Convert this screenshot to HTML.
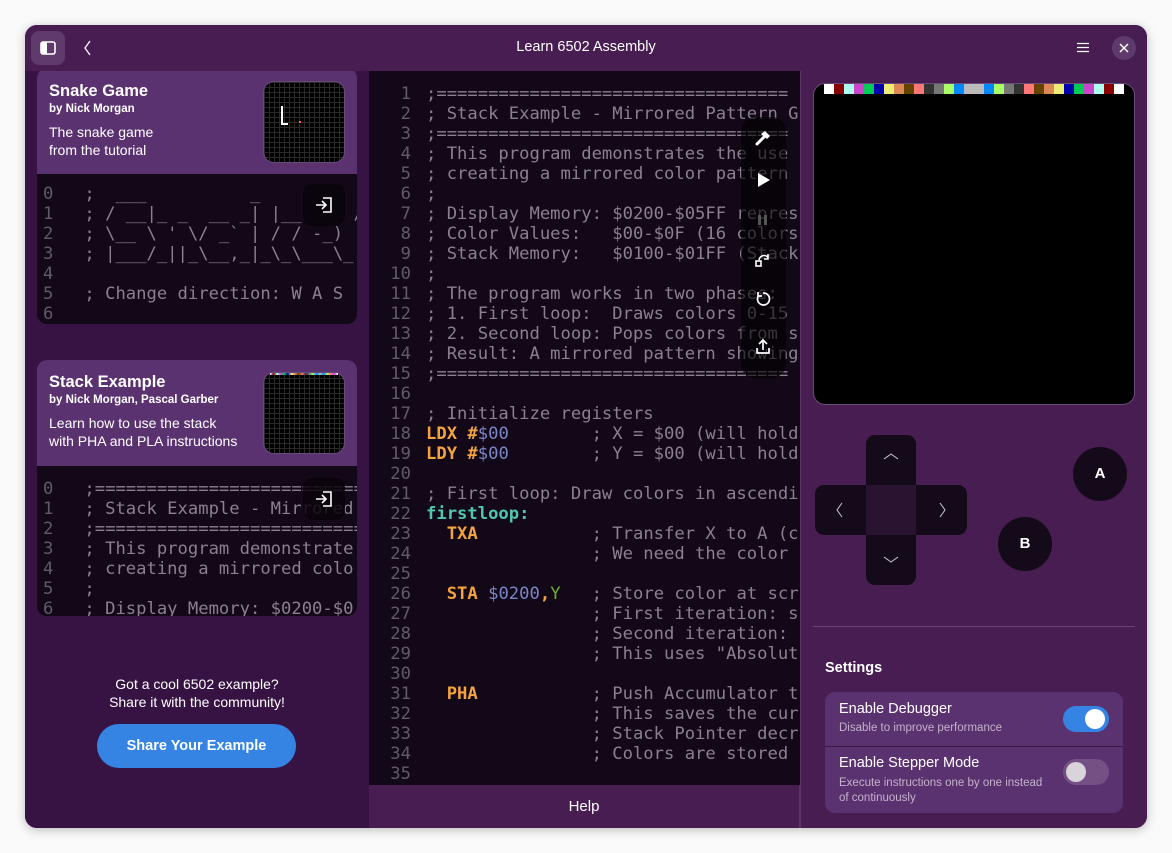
<!DOCTYPE html>
<html><head><meta charset="utf-8"><style>
*{box-sizing:border-box;margin:0;padding:0}
body{width:1172px;height:853px;background:#fafafa;position:relative;overflow:hidden;font-family:"Liberation Sans",sans-serif;color:#fff}
.win{position:absolute;left:25px;top:25px;width:1122px;height:803px;border-radius:12px;overflow:hidden;background:#471d52;box-shadow:0 2px 10px rgba(0,0,0,.25)}
.abs{position:absolute}
.mono{font-family:"DejaVu Sans Mono","Liberation Mono",monospace;font-size:17.2px;line-height:20px;white-space:pre;color:#8a8090}
.ln{color:#625a6a;text-align:right}
.side{left:0;top:46px;width:344px;height:757px;background:#361342;overflow:hidden}
.card{position:absolute;left:12px;width:320px;border-radius:10px;overflow:hidden;background:#130817}
.ch{background:#5a3270;height:106px;position:relative}
.ch h3{position:absolute;left:12px;font-size:16.5px;font-weight:bold}
.ch .by{position:absolute;left:12px;font-size:11.5px;font-weight:bold}
.ch .d{position:absolute;left:12px;font-size:14px;line-height:18px}
.thumb{position:absolute;left:226px;width:82px;height:82px;border-radius:11px;background-color:#000;border:1px solid #6a4a7a;background-image:linear-gradient(#2a2a2a 1px,transparent 1px),linear-gradient(90deg,#2a2a2a 1px,transparent 1px);background-size:5px 5px}
.ibtn{position:absolute;left:266px;width:42px;height:42px;border-radius:9px;background:#0a040c}
.code{left:344px;top:46px;width:431px;height:714px;background:#130817;overflow:hidden}
.kw{color:#f5a33f;font-weight:bold}.num{color:#7b86c8}.lbl{color:#4fc6b0;font-weight:bold}.reg{color:#6fae2a}
.help{left:344px;top:760px;width:431px;height:43px;background:#471d52;text-align:center;line-height:43px;font-size:15px;border-right:1px solid #5c3468}
.right{left:775px;top:46px;width:347px;height:757px;background:#471d52;border-left:1px solid #5c3468}
.pad{position:absolute;background:#150a1a}
.circ{position:absolute;width:54px;height:54px;border-radius:50%;background:#150a1a;text-align:center;line-height:54px;font-weight:bold;font-size:15px}
</style></head><body>
<div class="win">
 <div class="abs" style="left:0;top:0;width:1122px;height:46px;background:#471d52"></div>
 <div class="abs" style="left:6px;top:6px;width:34px;height:34px;border-radius:8px;background:#5f3a6d"></div>
 <svg class="abs" style="left:15px;top:16px" width="16" height="14" viewBox="0 0 16 14"><rect x="1" y="1" width="14" height="12" rx="2" fill="none" stroke="#fff" stroke-width="1.6"/><rect x="1" y="1" width="6" height="12" fill="#fff"/></svg>
 <svg class="abs" style="left:58px;top:15px" width="10" height="16"><path d="M7 1 L2 8 L7 15" fill="none" stroke="#fff" stroke-width="1.3"/></svg>
 <div class="abs" style="left:0;width:1122px;top:14px;text-align:center;font-size:14.5px">Learn 6502 Assembly</div>
 <svg class="abs" style="left:1052px;top:17px" width="12" height="11"><path d="M0 1.5H12M0 5.5H12M0 9.5H12" stroke="#fff" stroke-width="1.3"/></svg>
 <div class="abs" style="left:1087px;top:11px;width:24px;height:24px;border-radius:50%;background:#5f3a6d"></div>
 <svg class="abs" style="left:1094px;top:18px" width="10" height="10"><path d="M1 1L9 9M9 1L1 9" stroke="#fff" stroke-width="1.5"/></svg>

 <div class="abs side">
  <div class="card" style="top:-3px;height:256px">
   <div class="ch">
    <h3 style="top:14px">Snake Game</h3>
    <div class="by" style="top:35px">by Nick Morgan</div>
    <div class="d" style="top:55px">The snake game<br>from the tutorial</div>
    <div class="thumb" style="top:13px"><svg class="abs" style="left:16px;top:22px" width="30" height="30"><path d="M2 2V20H8" fill="none" stroke="#fff" stroke-width="2"/><rect x="19" y="17" width="2" height="2" fill="#f55"/></svg></div>
   </div>
   <div class="abs mono" style="left:6px;top:116px"><span class="ln">0</span>   ;  ___          _
<span class="ln">1</span>   ; / __|_ _  __ _| |__ ___ /
<span class="ln">2</span>   ; \__ \ ' \/ _` | / / -_) 
<span class="ln">3</span>   ; |___/_||_\__,_|_\_\___\_
<span class="ln">4</span>
<span class="ln">5</span>   ; Change direction: W A S
<span class="ln">6</span></div>
   <div class="ibtn" style="top:116px"><svg class="abs" style="left:12px;top:12px" width="18" height="18"><path d="M8 2H16V16H8" fill="none" stroke="#fff" stroke-width="1.6"/><path d="M1 9H11M7 5L11 9L7 13" fill="none" stroke="#fff" stroke-width="1.6"/></svg></div>
  </div>
  <div class="card" style="top:289px;height:256px">
   <div class="ch">
    <h3 style="top:13px">Stack Example</h3>
    <div class="by" style="top:34px">by Nick Morgan, Pascal Garber</div>
    <div class="d" style="top:54px">Learn how to use the stack<br>with PHA and PLA instructions</div>
    <div class="thumb" style="top:12px"><div class="abs" style="left:6px;top:0;width:68px;height:2px;background:linear-gradient(90deg,#fff,#880000,#aaffee,#cc44cc,#00cc55,#0000aa,#eeee77,#dd8855,#664400,#ff7777,#333,#777,#aaff66,#0088ff,#bbb,#0088ff,#aaff66,#ff7777,#cc44cc,#fff)"></div></div>
   </div>
   <div class="abs mono" style="left:6px;top:119px"><span class="ln">0</span>   ;===========================
<span class="ln">1</span>   ; Stack Example - Mirrored
<span class="ln">2</span>   ;===========================
<span class="ln">3</span>   ; This program demonstrate
<span class="ln">4</span>   ; creating a mirrored colo
<span class="ln">5</span>   ;
<span class="ln">6</span>   ; Display Memory: $0200-$0</div>
   <div class="ibtn" style="top:118px;background:rgba(10,4,12,.85)"><svg class="abs" style="left:12px;top:12px" width="18" height="18"><path d="M8 2H16V16H8" fill="none" stroke="#fff" stroke-width="1.6"/><path d="M1 9H11M7 5L11 9L7 13" fill="none" stroke="#fff" stroke-width="1.6"/></svg></div>
  </div>
  <div class="abs" style="left:0;width:344px;top:604px;text-align:center;font-size:14px;line-height:18px">Got a cool 6502 example?<br>Share it with the community!</div>
  <div class="abs" style="left:72px;top:653px;width:199px;height:44px;border-radius:22px;background:#3584e4;text-align:center;line-height:44px;font-weight:bold;font-size:14.5px">Share Your Example</div>
 </div>

 <div class="abs code">
  <div class="abs mono ln" style="left:0;width:42px;top:13px">1
2
3
4
5
6
7
8
9
10
11
12
13
14
15
16
17
18
19
20
21
22
23
24
25
26
27
28
29
30
31
32
33
34
35</div>
  <div class="abs mono" style="left:57px;top:13px">;==================================
; Stack Example - Mirrored Pattern G
;==================================
; This program demonstrates the use
; creating a mirrored color pattern
;
; Display Memory: $0200-$05FF repres
; Color Values:   $00-$0F (16 colors
; Stack Memory:   $0100-$01FF (Stack
;
; The program works in two phases:
; 1. First loop:  Draws colors 0-15
; 2. Second loop: Pops colors from s
; Result: A mirrored pattern showing
;==================================

; Initialize registers
<span class="kw">LDX #</span><span class="num">$00</span>        ; X = $00 (will hold
<span class="kw">LDY #</span><span class="num">$00</span>        ; Y = $00 (will hold

; First loop: Draw colors in ascendi
<span class="lbl">firstloop:</span>
  <span class="kw">TXA</span>           ; Transfer X to A (c
                ; We need the color

  <span class="kw">STA</span> <span class="num">$0200</span><span class="kw">,</span><span class="reg">Y</span>   ; Store color at scr
                ; First iteration: s
                ; Second iteration:
                ; This uses "Absolut

  <span class="kw">PHA</span>           ; Push Accumulator t
                ; This saves the cur
                ; Stack Pointer decr
                ; Colors are stored
</div>
  <div class="abs" style="left:372px;top:46px;width:45px;height:261px;border-radius:14px;background:rgba(0,0,0,.6)"></div>
  <svg class="abs" style="left:385px;top:58px" width="18" height="18"><path d="M3 15L10 8" stroke="#fff" stroke-width="3" stroke-linecap="round"/><path d="M7 5L11 2L16 7L13 10Z" fill="#fff"/></svg>
  <svg class="abs" style="left:388px;top:101px" width="14" height="16"><path d="M1 1L13 8L1 15Z" fill="#fff"/></svg>
  <svg class="abs" style="left:388px;top:143px" width="12" height="12"><rect x="1" y="1" width="3" height="10" fill="#555"/><rect x="7" y="1" width="3" height="10" fill="#555"/></svg>
  <svg class="abs" style="left:386px;top:181px" width="16" height="16"><rect x="1" y="9" width="5" height="5" fill="none" stroke="#fff" stroke-width="1.6"/><path d="M4 8C5 3 11 2 13 6M13 2V7H9" fill="none" stroke="#fff" stroke-width="1.6"/></svg>
  <svg class="abs" style="left:386px;top:220px" width="16" height="16"><path d="M4 4A6 6 0 1 0 8 2M3 1V5H7" fill="none" stroke="#fff" stroke-width="1.7"/></svg>
  <svg class="abs" style="left:386px;top:266px" width="16" height="18"><path d="M8 13V3M4 7L8 3L12 7M2 11V16H14V11" fill="none" stroke="#fff" stroke-width="1.7"/></svg>
 </div>
 <div class="abs help">Help</div>

 <div class="abs right">
  <div class="abs" style="left:12px;top:12px;width:322px;height:322px;border-radius:12px;background:#000;border:1px solid #6a4a7a;overflow:hidden">
   <div class="abs" style="left:10px;top:0;height:10px;width:300px;display:flex">
    <i style="flex:1;background:#fff"></i><i style="flex:1;background:#880000"></i><i style="flex:1;background:#aaffee"></i><i style="flex:1;background:#cc44cc"></i><i style="flex:1;background:#00cc55"></i><i style="flex:1;background:#0000aa"></i><i style="flex:1;background:#eeee77"></i><i style="flex:1;background:#dd8855"></i><i style="flex:1;background:#664400"></i><i style="flex:1;background:#ff7777"></i><i style="flex:1;background:#333"></i><i style="flex:1;background:#777"></i><i style="flex:1;background:#aaff66"></i><i style="flex:1;background:#0088ff"></i><i style="flex:1;background:#bbb"></i><i style="flex:1;background:#bbb"></i><i style="flex:1;background:#0088ff"></i><i style="flex:1;background:#aaff66"></i><i style="flex:1;background:#777"></i><i style="flex:1;background:#333"></i><i style="flex:1;background:#ff7777"></i><i style="flex:1;background:#664400"></i><i style="flex:1;background:#dd8855"></i><i style="flex:1;background:#eeee77"></i><i style="flex:1;background:#0000aa"></i><i style="flex:1;background:#00cc55"></i><i style="flex:1;background:#cc44cc"></i><i style="flex:1;background:#aaffee"></i><i style="flex:1;background:#880000"></i><i style="flex:1;background:#fff"></i>
   </div>
  </div>
  <div class="pad" style="left:65px;top:364px;width:50px;height:150px;border-radius:9px"></div>
  <div class="pad" style="left:14px;top:414px;width:152px;height:50px;border-radius:9px"></div>
  <div class="abs" style="left:65px;top:414px;width:50px;height:50px;background:#2a1231"></div>
  <svg class="abs" style="left:82px;top:382px" width="16" height="8"><path d="M1 6L8 1L15 6" fill="none" stroke="#ccc" stroke-width="1"/></svg>
  <svg class="abs" style="left:82px;top:484px" width="16" height="8"><path d="M1 2L8 7L15 2" fill="none" stroke="#ccc" stroke-width="1"/></svg>
  <svg class="abs" style="left:35px;top:431px" width="8" height="16"><path d="M6 1L1 8L6 15" fill="none" stroke="#ccc" stroke-width="1"/></svg>
  <svg class="abs" style="left:137px;top:431px" width="8" height="16"><path d="M2 1L7 8L2 15" fill="none" stroke="#ccc" stroke-width="1"/></svg>
  <div class="circ" style="left:272px;top:376px">A</div>
  <div class="circ" style="left:197px;top:446px">B</div>
  <div class="abs" style="left:12px;top:555px;width:322px;height:1px;background:#6a4478"></div>
  <div class="abs" style="left:24px;top:589px;font-size:14.5px;font-weight:bold">Settings</div>
  <div class="abs" style="left:24px;top:621px;width:298px;height:121px;border-radius:10px;background:#5a3270;overflow:hidden">
   <div class="abs" style="left:0;top:54px;width:298px;height:1px;background:#3a1a45"></div>
   <div class="abs" style="left:14px;top:9px;font-size:14.5px">Enable Debugger</div>
   <div class="abs" style="left:14px;top:30px;font-size:11.5px;color:#c4b2cc">Disable to improve performance</div>
   <div class="abs" style="left:238px;top:14px;width:46px;height:26px;border-radius:13px;background:#3584e4"><div class="abs" style="left:22px;top:3px;width:20px;height:20px;border-radius:50%;background:#fff"></div></div>
   <div class="abs" style="left:14px;top:63px;font-size:14.5px">Enable Stepper Mode</div>
   <div class="abs" style="left:14px;top:84px;font-size:11.5px;line-height:15px;color:#c4b2cc">Execute instructions one by one instead<br>of continuously</div>
   <div class="abs" style="left:238px;top:67px;width:46px;height:26px;border-radius:13px;background:#745085"><div class="abs" style="left:3px;top:3px;width:20px;height:20px;border-radius:50%;background:#d8d4da"></div></div>
  </div>
 </div>
</div>
</body></html>
